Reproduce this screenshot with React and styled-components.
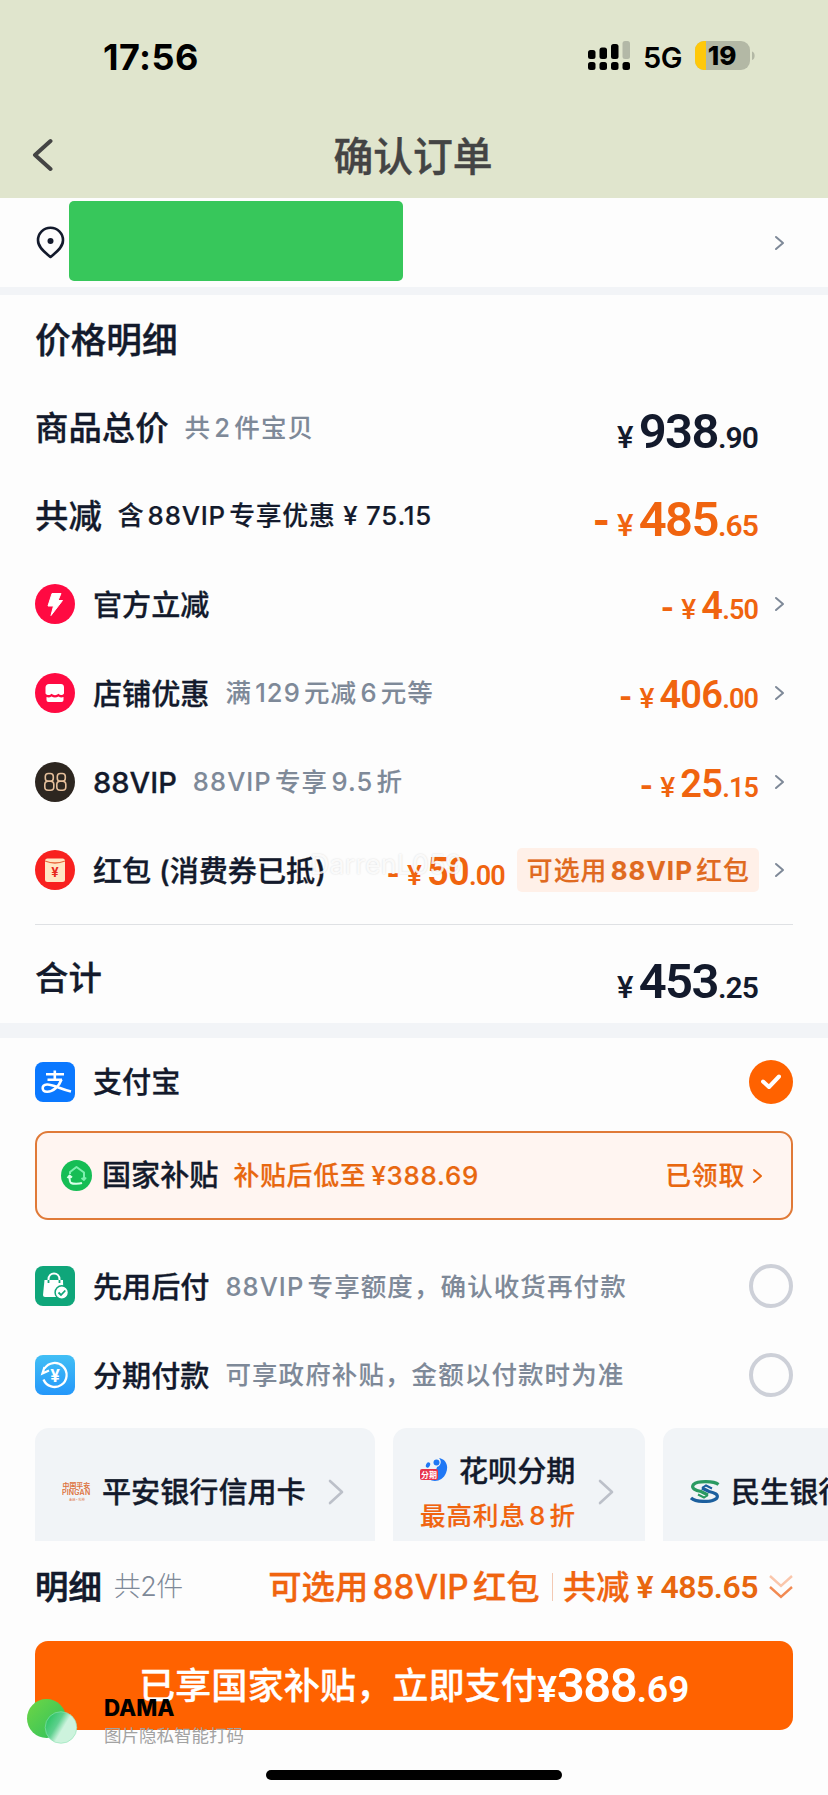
import React, { useState } from "react";
import styled, { createGlobalStyle } from "styled-components";

// Styles
const GlobalStyle = createGlobalStyle`
  * {
    box-sizing: border-box;
  }

  body {
    margin: 0;
    background: #fdfdfd;
    color: #131a2c;
    font-family: Inter, "Noto Sans CJK SC", sans-serif;
    line-height: 1;
    text-autospace: normal;
  }
`;

const Screen = styled.main`
  position: relative;
  width: 828px;
  height: 1795px;
  overflow: hidden;
  display: flex;
  flex-direction: column;
`;

const Header = styled.header`
  height: 198px;
  background: #e0e5cd;
`;

const StatusBar = styled.div`
  height: 112px;
  padding: 0 72px 0 103px;
  display: flex;
  justify-content: space-between;
  align-items: center;

  .time {
    margin-top: 1px;
    font-size: 36px;
    font-weight: 700;
    color: #000;
    letter-spacing: 0.4px;
  }

  .status {
    display: flex;
    align-items: center;
    color: #000;
  }

  .network {
    margin: 2px 13px 0 12px;
    font-size: 29px;
    font-weight: 600;
    letter-spacing: -0.5px;
  }
`;

const TitleBar = styled.div`
  height: 86px;
  padding: 0 34px 0 32px;
  display: grid;
  grid-template-columns: 60px 1fr 60px;
  align-items: center;

  h1 {
    margin: 3px 0 0;
    text-align: center;
    font-size: 39.8px;
    font-weight: 500;
    color: #444;
    -webkit-text-stroke: 0.4px #444;
  }
`;

const AddressRow = styled.div`
  height: 89px;
  padding: 0 44px 0 36px;
  display: flex;
  align-items: center;

  .address {
    width: 334px;
    height: 80px;
    margin: -3px auto 0 4px;
    border-radius: 5px;
    background: #37c75b;
  }
`;

const Band = styled.div`
  flex: none;
  height: ${props => props.$height}px;
  background: #f2f4f7;
`;

const Section = styled.section`
  padding: 0 35px;
`;

const SectionTitle = styled.h2`
  margin: 0;
  height: 88px;
  line-height: 90px;
  font-size: 35.7px;
  font-weight: 500;
  -webkit-text-stroke: 0.4px;
`;

const Row = styled.div`
  height: 88.6px;
  display: flex;
  align-items: center;

  > svg:first-child {
    flex: none;
    margin-right: 18px;
  }
`;

const TotalRow = styled(Row)`
  height: 98px;
  padding-top: 8px;
`;

const Label = styled.span`
  margin-top: 2px;
  font-size: ${props => (props.$big ? 33.4 : 29.1)}px;
  font-weight: 500;
  white-space: nowrap;
  -webkit-text-stroke: 0.3px;
`;

const Note = styled.span`
  margin-left: 16px;
  font-size: ${props => (props.$dark ? 25.8 : 25.5)}px;
  font-weight: ${props => (props.$dark ? 500 : 450)};
  letter-spacing: ${props => (props.$dark ? 0.8 : 1.1)}px;
  color: ${props => (props.$dark ? "#131a2c" : "#7e8998")};
  white-space: nowrap;
  -webkit-text-stroke: ${props => (props.$dark ? 0.2 : 0.1)}px;
`;

const PriceText = styled.span`
  margin: ${props => (props.$big ? "8px" : "4px")} 0 0 auto;
  font-family: Roboto, "Noto Sans CJK SC", sans-serif;
  font-size: ${props => (props.$big ? 30 : 27)}px;
  font-weight: 600;
  letter-spacing: -0.9px;
  color: ${props => (props.$dark ? "#131a2c" : "#f0640f")};
  white-space: nowrap;

  .yen {
    margin: 0 6px 0 6px;
    font-size: ${props => (props.$big ? 31 : 28)}px;
    font-weight: 500;
  }

  .int {
    font-size: ${props => (props.$big ? 49 : 38)}px;
    letter-spacing: ${props => (props.$big ? -1.6 : -0.8)}px;
  }

  .minus {
    margin-right: 2px;
    font-size: ${props => (props.$big ? 44 : 34)}px;
    font-weight: 700;
  }
`;

const ArrowSlot = styled.div`
  flex: none;
  width: 35px;
  padding-right: 9px;
  display: flex;
  justify-content: flex-end;
`;

const CouponTag = styled.span`
  height: 44px;
  margin: 0 -1px 0 12px;
  padding: 0 9px 0 10px;
  line-height: 45px;
  border-radius: 5px;
  background: #fff0e8;
  color: #e06a20;
  font-size: 25.8px;
  font-weight: 500;
  letter-spacing: 1.1px;
  white-space: nowrap;
  -webkit-text-stroke: 0.2px;

  b {
    font-weight: 700;
  }
`;

const Divider = styled.div`
  height: 1px;
  margin-top: 9px;
  background: #dfe1e4;
`;

const Radio = styled.button`
  flex: none;
  width: 44px;
  height: 44px;
  margin-left: auto;
  padding: 0;
  display: grid;
  place-items: center;
  border-radius: 50%;
  border: ${props => (props.$on ? "none" : "4px solid #cdd0d8")};
  background: ${props => (props.$on ? "#ff6200" : "transparent")};
`;

const Subsidy = styled.div`
  height: 89px;
  margin: 5px 0 22px;
  padding: 0 29px 0 24px;
  display: flex;
  align-items: center;
  border: 2px solid #e07a38;
  border-radius: 13px;
  background: #fff5f1;

  ${Label} {
    margin: 0 0 0 10px;
  }

  .offer,
  .claimed {
    font-size: 25.8px;
    font-weight: 500;
    color: #e8670f;
    letter-spacing: 0.8px;
    white-space: nowrap;
    -webkit-text-stroke: 0.2px;
  }

  .offer {
    margin-left: 15px;
  }

  .offer b {
    margin-left: 5px;
    font-weight: 500;
  }

  .claimed {
    margin: 0 8px 0 auto;
  }
`;

const CardStrip = styled.div`
  height: 113px;
  margin-top: 9px;
  padding-left: 35px;
  display: flex;
  gap: 18px;
  overflow: hidden;
`;

const BankCard = styled.div`
  flex: none;
  width: ${props => props.$width}px;
  padding: 14px 32px 0 27px;
  display: flex;
  align-items: center;
  justify-content: space-between;
  border-radius: 14px 14px 0 0;
  background: #f1f4f7;

  .name {
    display: flex;
    align-items: center;
    gap: 11px;
  }

  .with-promo {
    margin-top: 4px;
  }

  .promo {
    margin-top: 13px;
    font-size: 25.5px;
    line-height: 34px;
    font-weight: 500;
    letter-spacing: 1px;
    color: #f0640f;
    white-space: nowrap;
    -webkit-text-stroke: 0.2px;
  }
`;

const Summary = styled.div`
  height: 92px;
  padding: 0 35px;
  display: flex;
  align-items: center;

  ${Label} {
    margin-top: 0;
    -webkit-text-stroke: 0.7px;
  }

  .count {
    margin: -2px auto 0 12px;
    font-size: 27px;
    font-weight: 300;
    letter-spacing: -0.5px;
    color: #7e8998;
    text-autospace: no-autospace;
  }

  .deal {
    font-size: 33.4px;
    font-weight: 500;
    color: #f0640f;
    white-space: nowrap;
    -webkit-text-stroke: 0.3px;
  }

  .line {
    width: 1px;
    height: 28px;
    margin: 0 10px 0 12px;
    background: #f3c9b3;
  }

  .amount {
    margin: 0 11px 0 7px;
    font-family: Roboto, sans-serif;
    font-size: 32px;
    font-weight: 600;
    color: #e8670f;
    letter-spacing: -0.5px;
    white-space: nowrap;
  }
`;

const PayButton = styled.button`
  flex: none;
  width: 758px;
  height: 89px;
  margin: 8px 0 0 35px;
  padding: 0;
  display: flex;
  align-items: center;
  justify-content: center;
  border: 0;
  border-radius: 13px;
  background: #ff6200;
  color: #fff;
  font-family: inherit;
  font-size: 36.2px;
  font-weight: 500;
  line-height: 1;
  white-space: nowrap;
  -webkit-text-stroke: 0.3px;

  .sum {
    margin-top: -1px;
    font-family: Roboto, sans-serif;
    font-size: 37.5px;
    font-weight: 600;
    letter-spacing: -0.3px;
    -webkit-text-stroke: 0;
  }

  .sum b {
    font-size: 49px;
    font-weight: 600;
    letter-spacing: -1.4px;
  }
`;

const HomeIndicator = styled.div`
  flex: none;
  width: 296px;
  height: 10px;
  margin: 40px auto 0;
  border-radius: 5px;
  background: #000;
`;

// Floating stamps lie over the page content
const DamaStamp = styled.div`
  position: absolute;
  left: 26px;
  top: 1692px;
  display: flex;
  gap: 24px;

  .brand {
    font-size: 22.3px;
    line-height: 31px;
    font-weight: 800;
    color: #000;
  }

  .slogan {
    font-size: 17.5px;
    line-height: 26px;
    color: #a2a2a2;
  }
`;

const NameStamp = styled.div`
  position: absolute;
  left: 310px;
  top: 847px;
  font-size: 27px;
  line-height: 36px;
  color: rgba(255, 255, 255, 0.85);
  text-shadow: 0 0 2px rgba(0, 0, 0, 0.14);
`;

const Arrow = ({ width = 9, height = 14, color = "#7e8998", stroke = 2 }) => (
  <svg width={width} height={height} viewBox={`0 0 ${width} ${height}`} overflow="visible">
    <path
      d={`M1 1L${width - 1} ${height / 2}L1 ${height - 1}`}
      fill="none"
      stroke={color}
      strokeWidth={stroke}
      strokeLinecap="round"
      strokeLinejoin="round"
    />
  </svg>
);

const BackArrow = () => (
  <svg width="21" height="34" viewBox="0 0 21 34">
    <path d="M18.5 3L3 17L18.5 31" fill="none" stroke="#444" strokeWidth="4" strokeLinecap="round" strokeLinejoin="round" />
  </svg>
);

const SignalIcon = () => (
  <svg width="43" height="30" viewBox="0 0 43 30">
    <rect x="0" y="9" width="7.5" height="9" rx="2.5" />
    <rect x="11.5" y="6.5" width="7.5" height="11.5" rx="2.5" />
    <rect x="23" y="3" width="7.5" height="15" rx="2.5" />
    <rect x="34.5" y="0" width="7.5" height="18" rx="2.5" fill="#b3b8a7" />
    {[0, 11.5, 23, 34.5].map(x => (
      <rect key={x} x={x} y="21" width="7.5" height="8" rx="2.5" />
    ))}
  </svg>
);

const BatteryIcon = () => (
  <svg width="61" height="30" viewBox="0 0 61 30" overflow="visible">
    <clipPath id="battery">
      <rect width="55" height="29" rx="9" />
    </clipPath>
    <g clipPath="url(#battery)">
      <rect width="55" height="29" fill="#b3b8a5" />
      <rect width="11" height="29" fill="#ffc80a" />
    </g>
    <path d="M57 10.5C60.5 11.5 60.5 18 57 19Z" fill="#b3b8a5" />
    <text x="27" y="24" textAnchor="middle" fontFamily="Inter" fontSize="26" fontWeight="800">
      19
    </text>
  </svg>
);

const PinIcon = () => (
  <svg width="29" height="33" viewBox="0 0 29 33">
    <path
      d="M14.5 31C10 27 2 22 2 14.2a12.5 12.5 0 0 1 25 0C27 22 19 27 14.5 31Z"
      fill="none"
      stroke="#131a2c"
      strokeWidth="2.6"
      strokeLinejoin="round"
    />
    <circle cx="14.5" cy="15" r="3" fill="#131a2c" />
  </svg>
);

const BoltIcon = () => (
  <svg width="40" height="40" viewBox="0 0 40 40">
    <circle cx="20" cy="20" r="20" fill="#ff0a42" />
    <path d="M17 9.5H26L23 16.5H27.5L16 31.5L18.5 22H13Z" fill="#fff" stroke="#fff" strokeLinejoin="round" />
  </svg>
);

const ShopIcon = () => (
  <svg width="40" height="40" viewBox="0 0 40 40">
    <circle cx="20" cy="20" r="20" fill="#ff0a42" />
    <path
      d="M14 11H26C28 11 29 12.5 29 14.5V20.5C27.5 22.5 25 22.5 23.5 20.8C21.5 22.7 18.5 22.7 16.5 20.8C15 22.5 12 22.5 10.5 20.5V14.5C10.5 12.5 12 11 14 11Z"
      fill="#fff"
    />
    <path d="M11.5 24Q14 25 16.5 23.5Q20 25.5 23.5 23.5Q26 25 28.5 24V27Q28.5 29 26.5 29H13.5Q11.5 29 11.5 27Z" fill="#fff" />
  </svg>
);

const VipIcon = () => (
  <svg width="40" height="40" viewBox="0 0 40 40">
    <circle cx="20" cy="20" r="20" fill="#2d2620" />
    <g fill="none" stroke="#e5bf9b" strokeWidth="1.6">
      <rect x="10.3" y="11.5" width="8" height="7.8" rx="3" />
      <rect x="9.8" y="19.3" width="9" height="9" rx="3.3" />
      <rect x="22.3" y="11.5" width="8" height="7.8" rx="3" />
      <rect x="21.8" y="19.3" width="9" height="9" rx="3.3" />
    </g>
  </svg>
);

const EnvelopeIcon = () => (
  <svg width="40" height="40" viewBox="0 0 40 40">
    <circle cx="20" cy="20" r="20" fill="#f8211f" />
    <rect x="10" y="8.5" width="20" height="23.5" rx="2.5" fill="#ffe6c4" />
    <path d="M10 11Q20 15 30 11" fill="none" stroke="#e8663c" strokeWidth="1.3" />
    <text x="20" y="26.5" textAnchor="middle" fontFamily="Inter" fontSize="13" fontWeight="700" fill="#e8281e">
      ¥
    </text>
  </svg>
);

const AlipayIcon = () => (
  <svg width="40" height="40" viewBox="0 0 40 40">
    <rect width="40" height="40" rx="8" fill="#0a78ff" />
    <g fill="none" stroke="#fff" strokeWidth="2.6">
      <path d="M11 12.3H29M19.8 8.5V18M12.5 17.8H27" />
      <path d="M26.5 17.5C24 24.5 18 30 12 29.8C6.5 29.5 6 23 12 22.5C17 22 24 26.5 36 29.5" />
    </g>
  </svg>
);

const SubsidyIcon = () => (
  <svg width="31" height="31" viewBox="0 0 31 31">
    <circle cx="15.5" cy="15.5" r="15.5" fill="#16bd55" />
    <g fill="none" stroke="#7df0ae" strokeWidth="2" strokeLinejoin="round">
      <path d="M9 14V12L15.5 7L23 12.5V19.5" />
      <path d="M25 17.5L23 20L20.5 18" />
      <path d="M21 23C18 24 12 24 10 23C8.5 22 8.5 19 8.5 16M6.5 18L8.5 15.5L11 17.5" stroke="#d8ffe8" />
    </g>
  </svg>
);

const BagIcon = () => (
  <svg width="40" height="40" viewBox="0 0 40 40">
    <rect width="40" height="40" rx="8" fill="#0fa67a" />
    <path d="M9.5 14H28L28.5 31H10Q8 31 8 29Z" fill="#fff" />
    <path d="M13.5 17V13.5C13.5 5.5 24.5 5.5 24.5 13.5V17" fill="none" stroke="#fff" strokeWidth="2" />
    <path d="M13.5 14V17M24.5 14V17" stroke="#0fa67a" strokeWidth="1.8" />
    <circle cx="26.8" cy="26.5" r="6.7" fill="#fff" stroke="#0fa67a" strokeWidth="1.5" />
    <path d="M23.5 26.5L26 29L30.3 24.5" fill="none" stroke="#0fa67a" strokeWidth="1.8" />
  </svg>
);

const InstalmentIcon = () => (
  <svg width="40" height="40" viewBox="0 0 40 40">
    <linearGradient id="sky" x2="0" y2="1">
      <stop stopColor="#42bff5" />
      <stop offset="1" stopColor="#2497fa" />
    </linearGradient>
    <rect width="40" height="40" rx="8" fill="url(#sky)" />
    <path
      d="M8.5 24.5A12 12 0 1 0 9.5 13.5M14 15.5L7.5 18.5L9.5 12"
      fill="none"
      stroke="#fff"
      strokeWidth="2.3"
    />
    <text x="20" y="26.5" textAnchor="middle" fontFamily="Inter" fontSize="17" fontWeight="700" fill="#fff">
      ¥
    </text>
  </svg>
);

const PinganLogo = () => (
  <svg width="29" height="19" viewBox="0 0 29 19" fontFamily="Noto Sans CJK SC" fill="#dd7340">
    <text x="0.5" y="6.3" fontSize="6.9" fontWeight="700">中国平安</text>
    <text x="0" y="13.3" fontSize="7" fontFamily="Inter" fontWeight="600" letterSpacing="0.2">PINGAN</text>
    <text x="7" y="18.5" fontSize="3.2">金融·科技</text>
  </svg>
);

const HuabeiLogo = () => (
  <svg width="28" height="26" viewBox="0 0 28 26">
    <path d="M19 1C26 2 29 9 26 16C23 24 14 26 9 22L5 13C9 17 16 15 17 10C21 9 22 4 19 1Z" fill="#2078f5" />
    <ellipse cx="8" cy="8" rx="2" ry="2.8" fill="#2078f5" transform="rotate(25 8 8)" />
    <circle cx="16.5" cy="5.5" r="3" fill="#2078f5" />
    <rect y="12" width="18" height="11" rx="2" fill="#e8344c" />
    <text x="9" y="20.5" textAnchor="middle" fontFamily="Noto Sans CJK SC" fontSize="8" fontWeight="700" fill="#fff">
      分期
    </text>
  </svg>
);

const MinshengLogo = () => (
  <svg width="30" height="23" viewBox="0 0 30 23" fill="none">
    <path d="M28.5 4.5C24 1 8 0.5 3.5 4.5C0.5 8.5 6 10.5 11 11.5L18 15" stroke="#2b9a62" strokeWidth="3.2" />
    <path d="M1 18C6 22.5 22 22.5 26.5 18.5C29.5 14.5 24 12.5 19 11.5L12 8" stroke="#1c5f9e" strokeWidth="3.2" />
    <path d="M12 8L16 5.5L22 8.5" stroke="#1c5f9e" strokeWidth="2" />
    <path d="M18 15L14 17.5L8 14.5" stroke="#2b9a62" strokeWidth="2" />
  </svg>
);

const StampLogo = () => (
  <svg width="54" height="54" viewBox="0 0 54 54">
    <linearGradient id="leaf" x2="1" y2="1">
      <stop stopColor="#6fd644" />
      <stop offset="1" stopColor="#2cc05f" />
    </linearGradient>
    <linearGradient id="glass" x2="1" y2="0.6">
      <stop offset="0.2" stopColor="#35c76b" />
      <stop offset="0.45" stopColor="#5ed08e" />
      <stop offset="0.65" stopColor="#cdf3dd" />
    </linearGradient>
    <circle cx="20.5" cy="26.5" r="19.5" fill="url(#leaf)" />
    <circle cx="35" cy="35.5" r="15.8" fill="url(#glass)" stroke="#8fe3b4" strokeWidth="0.6" />
  </svg>
);

const Price = ({ value, minus, big, dark }) => {
  const [int, decimal] = value.split(".");

  return (
    <PriceText $big={big} $dark={dark}>
      {minus && <span className="minus">-</span>}
      <span className="yen">¥</span>
      <span className="int">{int}</span>.{decimal}
    </PriceText>
  );
};

const PayRadio = ({ on, onClick }) => (
  <Radio $on={on} onClick={onClick}>
    {on && (
      <svg width="20" height="16" viewBox="0 0 20 16">
        <path d="M2 7.5L8 13L18 2.5" fill="none" stroke="#fff" strokeWidth="4" strokeLinecap="round" strokeLinejoin="round" />
      </svg>
    )}
  </Radio>
);

const discounts = [
  { icon: <BoltIcon />, label: "官方立减", value: "4.50" },
  { icon: <ShopIcon />, label: "店铺优惠", note: "满129元减6元等", value: "406.00" },
  { icon: <VipIcon />, label: "88VIP", note: "88VIP专享9.5折", value: "25.15" },
  { icon: <EnvelopeIcon />, label: "红包 (消费券已抵)", value: "50.00", coupon: true }
];

const payments = [
  { id: "later", icon: <BagIcon />, label: "先用后付", note: "88VIP专享额度，确认收货再付款" },
  { id: "parts", icon: <InstalmentIcon />, label: "分期付款", note: "可享政府补贴，金额以付款时为准" }
];

const App = () => {
  const [method, setMethod] = useState("alipay");

  return (
    <Screen>
      <GlobalStyle />
      <Header>
        <StatusBar>
          <span className="time">17:56</span>
          <div className="status">
            <SignalIcon />
            <span className="network">5G</span>
            <BatteryIcon />
          </div>
        </StatusBar>
        <TitleBar>
          <BackArrow />
          <h1>确认订单</h1>
        </TitleBar>
      </Header>

      <AddressRow>
        <PinIcon />
        <div className="address" />
        <Arrow />
      </AddressRow>
      <Band $height={8} />

      <Section>
        <SectionTitle>价格明细</SectionTitle>
        <Row>
          <Label $big>商品总价</Label>
          <Note>共2件宝贝</Note>
          <Price big dark value="938.90" />
          <ArrowSlot />
        </Row>
        <Row>
          <Label $big>共减</Label>
          <Note $dark>含88VIP专享优惠 ¥ 75.15</Note>
          <Price big minus value="485.65" />
          <ArrowSlot />
        </Row>
        {discounts.map(item => (
          <Row key={item.label}>
            {item.icon}
            <Label>{item.label}</Label>
            {item.note && <Note>{item.note}</Note>}
            <Price minus value={item.value} />
            {item.coupon && (
              <CouponTag>
                可选用<b>88VIP</b>红包
              </CouponTag>
            )}
            <ArrowSlot>
              <Arrow />
            </ArrowSlot>
          </Row>
        ))}
        <Divider />
        <TotalRow>
          <Label $big>合计</Label>
          <Price big dark value="453.25" />
          <ArrowSlot />
        </TotalRow>
      </Section>
      <Band $height={15} />

      <Section>
        <Row>
          <AlipayIcon />
          <Label>支付宝</Label>
          <PayRadio on={method === "alipay"} onClick={() => setMethod("alipay")} />
        </Row>
        <Subsidy>
          <SubsidyIcon />
          <Label>国家补贴</Label>
          <span className="offer">
            补贴后低至<b>¥388.69</b>
          </span>
          <span className="claimed">已领取</span>
          <Arrow color="#e8670f" />
        </Subsidy>
        {payments.map(item => (
          <Row key={item.id}>
            {item.icon}
            <Label>{item.label}</Label>
            <Note>{item.note}</Note>
            <PayRadio on={method === item.id} onClick={() => setMethod(item.id)} />
          </Row>
        ))}
      </Section>

      <CardStrip>
        <BankCard $width={340}>
          <div className="name">
            <PinganLogo />
            <Label>平安银行信用卡</Label>
          </div>
          <Arrow width={14} height={24} color="#bcc0c9" stroke={2.6} />
        </BankCard>
        <BankCard $width={252}>
          <div className="with-promo">
            <div className="name">
              <HuabeiLogo />
              <Label>花呗分期</Label>
            </div>
            <div className="promo">最高利息8折</div>
          </div>
          <Arrow width={14} height={24} color="#bcc0c9" stroke={2.6} />
        </BankCard>
        <BankCard $width={340}>
          <div className="name">
            <MinshengLogo />
            <Label>民生银行</Label>
          </div>
        </BankCard>
      </CardStrip>

      <Summary>
        <Label $big>明细</Label>
        <span className="count">共2件</span>
        <span className="deal">可选用88VIP红包</span>
        <span className="line" />
        <span className="deal">共减</span>
        <span className="amount">¥ 485.65</span>
        <svg width="24" height="26" viewBox="0 0 24 26" fill="none" strokeWidth="2.4">
          <path d="M1 2L12 12L23 2" stroke="#fac6ab" />
          <path d="M1 13L12 23L23 13" stroke="#f28a52" />
        </svg>
      </Summary>
      <PayButton>
        已享国家补贴，立即支付
        <span className="sum">
          ¥<b>388</b>.69
        </span>
      </PayButton>
      <HomeIndicator />

      <NameStamp>DarrenL059</NameStamp>
      <DamaStamp>
        <StampLogo />
        <div>
          <div className="brand">DAMA</div>
          <div className="slogan">图片隐私智能打码</div>
        </div>
      </DamaStamp>
    </Screen>
  );
};

export default App;
